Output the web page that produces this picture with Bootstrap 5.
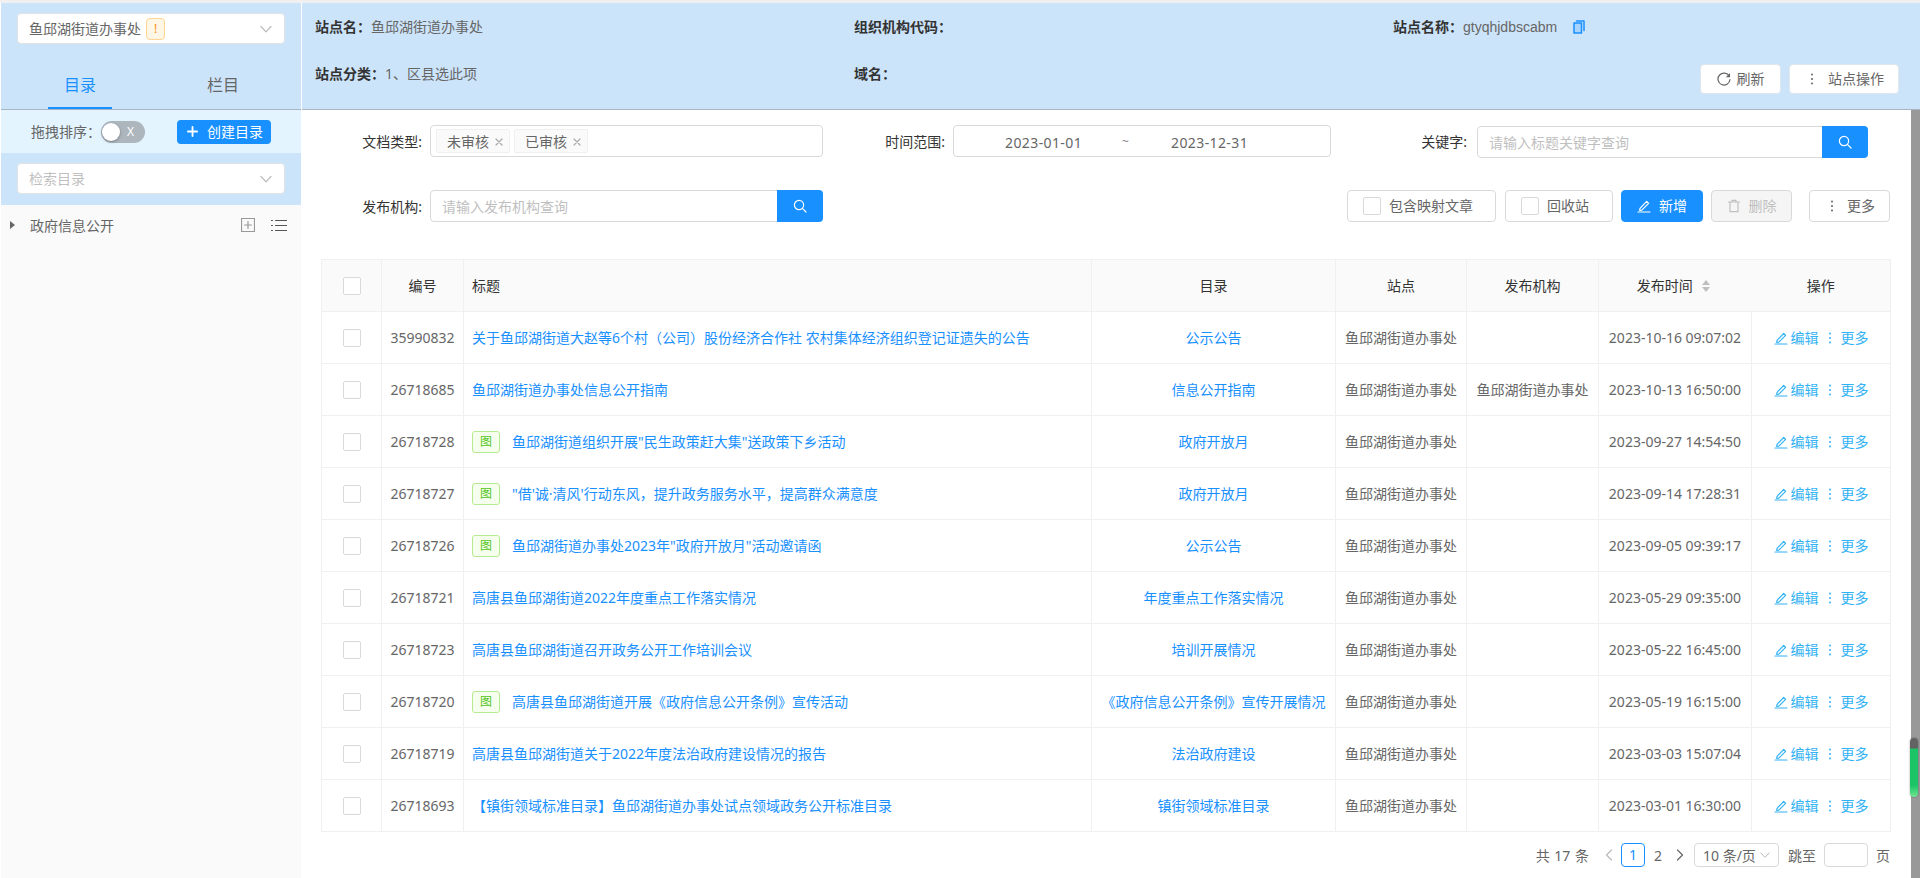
<!DOCTYPE html>
<html lang="zh-CN">

<head>
  <meta charset="UTF-8">
  <meta name="viewport" content="width=device-width, initial-scale=1.0">
  <title>站点文档管理</title>
  <link rel="stylesheet" href="https://cdn.jsdelivr.net/npm/bootstrap@5.3.0/dist/css/bootstrap.min.css">
  <style>
    html, body { height: 100%; }
    body { font-family: "Noto Sans", "Noto Sans CJK SC", sans-serif; font-size: 14px; color: #666; overflow: hidden; background: #fff; }
    .ic { display: inline-block; flex: none; fill: none; stroke: currentColor; stroke-width: 1.2; stroke-linecap: round; stroke-linejoin: round; }
    .ic-fill { fill: currentColor; stroke: none; }

    .app-shell { height: 100vh; border-top: 3px solid #f0f0f0; }

    /* sidebar */
    .side-col { width: 302px; flex: none; padding-left: 1px; border-right: 1px solid #fff; }
    .side-head { height: 107px; background: #cce4fa; border-bottom: 1px solid #a9b6c2; }
    .pick-box { height: 31px; margin: 0 16px; padding: 0 12px 0 11px; background: #fff; border: 1px solid #e2e2e2; border-radius: 4px; }
    .pick-first { margin-top: 10px; color: #666; }
    .warn-tag { width: 19px; height: 22px; margin-left: 5px; background: #fff7e6; border: 1px solid #ffd591; border-radius: 4px; color: #fa8c16; font-size: 12px; line-height: 20px; text-align: center; }
    .pick-arrow { color: #bbb; margin-left: auto; }
    .tab-row { height: 64px; margin-top: 1px; }
    .tab-item { width: 142px; height: 100%; padding-top: 28px; font-size: 16px; line-height: 24px; color: #666; text-align: center; }
    .tab-item + .tab-item { padding-left: 2px; }
    .tab-first { margin-left: 8px; color: #1890ff; }
    .tab-first span { display: block; width: 64px; height: 36px; margin: 0 auto; border-bottom: 2px solid #1890ff; }
    .side-tools { height: 43px; padding: 0 30px; background: #e3f4ff; }
    .tool-label { font-size: 14px; color: #666; }
    .sort-switch { position: relative; width: 44px; height: 22px; background: #adb5bd; border-radius: 11px; color: #fff; font-size: 12px; line-height: 22px; padding-left: 26px; }
    .sort-switch i { position: absolute; left: 1px; top: 2px; width: 18px; height: 18px; border-radius: 50%; background: #fff; box-shadow: 0 1px 3px rgba(0, 0, 0, .3); }
    .btn-create { width: 94px; height: 24px; margin-left: auto; padding: 0 0 0 10px; background: #1890ff; border: 0; border-radius: 4px; color: #fff; font-size: 14px; line-height: 24px; }
    .btn-create svg { margin-right: 9px; stroke-width: 2; }
    .side-search { height: 52px; padding-top: 10px; background: #cce4fa; }
    .ph-text { color: #bfbfbf; }
    .tree-wrap { flex: 1; background: #fafafa; }
    .tree-row { height: 40px; padding: 0 14px 0 9px; color: #666; }
    .tree-arrow { width: 0; height: 0; border-left: 5px solid #666; border-top: 4px solid transparent; border-bottom: 4px solid transparent; margin-right: 15px; }
    .tree-add { color: #999; }
    .tree-list { color: #555; }

    /* site header */
    .site-head { height: 107px; padding: 14px 21px 0 13px; background: #cce4fa; border-bottom: 1px solid #a9b6c2; color: #666; }
    .site-line { height: 47px; line-height: 20px; }
    .site-cell { width: 539px; flex: none; }
    .site-cell b, .site-key { color: #333; font-weight: 700; }
    .site-code { font-family: "Liberation Sans", sans-serif; }
    .copy-ic { margin: 3px 0 0 16px; color: #1890ff; stroke-width: 1.5; }
    .head-btn { height: 30px; padding: 0 0 1px; background: #fff; border: 1px solid #dfe6ec; border-radius: 4px; color: #666; font-size: 14px; }
    .head-refresh { width: 81px; margin-right: 8px; }
    .head-refresh svg { margin-right: 6px; }
    .head-ops { width: 110px; padding-left: 20px; }
    .head-ops svg { margin-right: 14px; }

    /* content */
    .main-wrap { flex: 1; min-height: 0; }
    .main-pane { flex: 1; padding: 15px 21px 0 18px; min-width: 0; }
    .scroll-rail { position: relative; width: 9px; flex: none; background: #999; }
    .scroll-thumb { position: absolute; left: -1px; top: 628px; width: 8px; height: 59px; border-radius: 4px; background: linear-gradient(#626262 0, #626262 10px, #1cc468 11px, #1cc468 80%, #6fe58f 100%); box-shadow: 0 0 2px rgba(0, 0, 0, .4); }

    .flt-label { height: 32px; color: #333; text-align: right; line-height: 33px; flex: none; padding-right: 3px; }
    .lab-a { width: 105px; margin-right: 5px; }
    .lab-b { width: 122px; margin-right: 8px; padding-right: 0; }
    .lab-c { width: 138px; margin-right: 8px; padding-right: 2px; }
    .field-box { height: 32px; background: #fff; border: 1px solid #d9d9d9; border-radius: 4px; }
    .field-a { width: 393px; padding-left: 5px; }
    .field-b { width: 378px; padding-top: 2px; color: #666; letter-spacing: .4px; }
    .date-a { margin-left: 51px; width: 75px; }
    .date-sep { width: 8px; margin: 0 41px 0 42px; color: #888; font-size: 12px; }
    .choice-tag { width: 74px; height: 24px; margin-right: 4px; padding: 1px 0 0 10px; background: #fafafa; border: 1px solid #f0f0f0; border-radius: 2px; color: #666; line-height: 22px; }
    .choice-tag svg { color: #aaa; margin-left: 6px; }
    .search-group { height: 32px; }
    .search-a { width: 393px; }
    .search-c { width: 391px; margin-top: 1px; }
    .search-group .form-control { height: 32px; padding: 0 11px; border-color: #d9d9d9; border-radius: 4px 0 0 4px; font-size: 14px; color: #666; box-shadow: none; }
    .search-group .form-control::placeholder { color: #bfbfbf; }
    .search-go { width: 46px; padding: 0; background: #1890ff; border: 0; border-radius: 0 4px 4px 0; color: #fff; }
    .flt-second { margin-top: 32px; }
    .act-btn { height: 32px; padding: 0 0 1px; background: #fff; border: 1px solid #d9d9d9; border-radius: 4px; color: #666; font-size: 14px; }
    .act-check { width: 18px; height: 18px; margin-right: 8px; border: 1px solid #d9d9d9; border-radius: 2px; background: #fff; }
    .act-map { width: 149px; margin-right: 9px; padding-left: 15px; }
    .act-recycle { width: 108px; margin-right: 8px; padding-left: 15px; }
    .act-new { width: 82px; margin-right: 8px; background: #1890ff; border-color: #1890ff; color: #fff; }
    .btn.act-del:disabled { width: 81px; margin-right: 17px; background: #f5f5f5; border-color: #d9d9d9; color: #bfbfbf; opacity: 1; }
    .act-more { width: 81px; padding-left: 20px; }
    .act-more svg { margin-right: 13px; }

    /* table */
    .doc-table { width: 1569px; margin: 37px 0 0 1px; table-layout: fixed; border-color: #f0f0f0; }
    .doc-table > :not(caption) > * > * { height: 52px; padding: 0 8px; border-color: #f0f0f0; color: #666; font-size: 14px; box-shadow: none; background: #fff; vertical-align: middle; }
    .doc-table > thead > tr > th { background: #fafafa; color: #333; font-weight: 400; }
    .doc-table > thead > tr > .no-right { border-right-width: 0; padding-right: 12px; }
    .doc-table > thead > tr > .no-left { border-left-width: 0; }
    .row-check { display: block; width: 18px; height: 18px; margin: 0 auto; background: #fff; border: 1px solid #d9d9d9; border-radius: 2px; }
    .doc-table a { color: #1890ff; text-decoration: none; }
    .doc-table .op-link { color: #33b2f5; }
    .op-link svg { margin-right: 3px; }
    .op-dots { margin: 0 9px; color: #33b2f5; }
    .pic-tag { width: 28px; height: 22px; margin-right: 12px; background: #f6ffed; border: 1px solid #b7eb8f; border-radius: 3px; color: #52c41a; font-size: 12px; line-height: 20px; text-align: center; flex: none; }
    .sort-mark { margin-left: 9px; color: #bfbfbf; vertical-align: -2px; }

    /* pager */
    .pager-row { height: 24px; margin-top: 11px; color: #666; }
    .pager-total { margin-right: 16px; word-spacing: 1px; }
    .pager-arrow { width: 8px; }
    .pager-on { width: 24px; height: 24px; margin: 0 9px 0 8px; border: 1px solid #1890ff; border-radius: 4px; color: #1890ff; line-height: 22px; text-align: center; }
    .pager-num { width: 8px; margin-right: 14px; }
    .pager-size { width: 85px; height: 24px; margin-left: 10px; padding-left: 8px; background: #fff; border: 1px solid #d9d9d9; border-radius: 4px; white-space: nowrap; }
    .pager-jump { margin: 0 8px 0 9px; }
    .pager-input { width: 44px; height: 24px; margin-right: 8px; border: 1px solid #d9d9d9; border-radius: 4px; }
  </style>
</head>

<body>
  <svg width="0" height="0" class="position-absolute">
    <symbol id="i-down" viewBox="0 0 12 12"><path d="M1 3.5 6 8.8l5-5.3"/></symbol>
    <symbol id="i-search" viewBox="0 0 14 14"><circle cx="6" cy="6" r="4.6"/><path d="m9.4 9.4 3.6 3.6"/></symbol>
    <symbol id="i-edit" viewBox="0 0 14 14"><path d="M3 9.3 9.7 2.4l1.9 1.9-6.8 6.8-2.1.2zM1 13h12"/></symbol>
    <symbol id="i-dots" viewBox="0 0 4 14"><circle class="ic-fill" cx="2" cy="2.5" r="1"/><circle class="ic-fill" cx="2" cy="7" r="1"/><circle class="ic-fill" cx="2" cy="11.500" r="1"/></symbol>
    <symbol id="i-x" viewBox="0 0 8 8"><path d="m1 1 6 6M7 1 1 7"/></symbol>
    <symbol id="i-trash" viewBox="0 0 14 14"><path d="M1.500 3h11M5 3V1.300h4V3M3 3v9.700h8V3"/></symbol>
    <symbol id="i-reload" viewBox="0 0 14 14"><path d="M12.300 4.200A6 6 0 1 0 13 7.500"/><path class="ic-fill" d="M13 1v4.200H8.800z"/></symbol>
    <symbol id="i-copy" viewBox="0 0 12 14"><path d="M3.500 1h7.500v9.500"/><path fill="#a9d3fb" d="M1 3h7.500v10H1z"/></symbol>
    <symbol id="i-list" viewBox="0 0 16 13"><path d="M4.500 1.500H16M4.500 6.500H16M4.500 11.500H16M.5 1.500h1M.5 6.500h1M.5 11.500h1"/></symbol>
    <symbol id="i-box-plus" viewBox="0 0 14 14"><path d="M.5.5h13v13H.5zM7 3.500v7M3.500 7h7"/></symbol>
    <symbol id="i-plus" viewBox="0 0 12 12"><path d="M6 1v10M1 6h10"/></symbol>
    <symbol id="i-left" viewBox="0 0 8 12"><path d="M6.500 1 1.500 6l5 5"/></symbol>
    <symbol id="i-right" viewBox="0 0 8 12"><path d="m1.500 1 5 5-5 5"/></symbol>
    <symbol id="i-sort" viewBox="0 0 8 14"><path class="ic-fill" d="M4 1 8 6H0zM4 13 0 8h8z"/></symbol>
  </svg>

  <div class="app-shell d-flex">
    <!-- left -->
    <div class="side-col d-flex flex-column">
      <div class="side-head">
        <div class="pick-box pick-first d-flex align-items-center">
          鱼邱湖街道办事处<span class="warn-tag">!</span>
          <svg class="ic pick-arrow" width="12" height="12"><use href="#i-down"/></svg>
        </div>
        <div class="tab-row d-flex">
          <div class="tab-item tab-first"><span>目录</span></div>
          <div class="tab-item">栏目</div>
        </div>
      </div>
      <div class="side-tools d-flex align-items-center">
        <span class="tool-label">拖拽排序：</span>
        <span class="sort-switch"><i></i>X</span>
        <button class="btn btn-create d-flex align-items-center" type="button">
          <svg class="ic" width="11" height="11"><use href="#i-plus"/></svg>创建目录
        </button>
      </div>
      <div class="side-search">
        <div class="pick-box d-flex align-items-center ph-text">
          检索目录
          <svg class="ic pick-arrow" width="12" height="12"><use href="#i-down"/></svg>
        </div>
      </div>
      <div class="tree-wrap">
        <div class="tree-row d-flex align-items-center">
          <span class="tree-arrow"></span>
          政府信息公开
          <svg class="ic ms-auto me-3 tree-add" width="14" height="14"><use href="#i-box-plus"/></svg>
          <svg class="ic tree-list" width="16" height="13"><use href="#i-list"/></svg>
        </div>
      </div>
    </div>

    <!-- right -->
    <div class="flex-grow-1 d-flex flex-column" style="min-width:0">
      <div class="site-head">
        <div class="site-line d-flex">
          <div class="site-cell"><b>站点名：</b>鱼邱湖街道办事处</div>
          <div class="site-cell"><b>组织机构代码：</b></div>
          <div class="d-flex align-items-start"><span class="site-key text-nowrap">站点名称：</span><span class="site-code">gtyqhjdbscabm</span>
            <svg class="ic copy-ic" width="12" height="14"><use href="#i-copy"/></svg>
          </div>
        </div>
        <div class="d-flex align-items-start" style="line-height:20px">
          <div class="site-cell"><b>站点分类：</b>1、区县选此项</div>
          <div class="site-cell"><b>域名：</b></div>
          <div class="ms-auto d-flex">
            <button class="btn head-btn head-refresh d-flex align-items-center justify-content-center" type="button">
              <svg class="ic" width="14" height="14"><use href="#i-reload"/></svg>刷新
            </button>
            <button class="btn head-btn head-ops d-flex align-items-center" type="button">
              <svg class="ic" width="4" height="14"><use href="#i-dots"/></svg>站点操作
            </button>
          </div>
        </div>
      </div>

      <div class="main-wrap d-flex">
        <div class="main-pane">
          <div class="d-flex">
            <div class="flt-label lab-a">文档类型:</div>
            <div class="field-box field-a d-flex align-items-center">
              <span class="choice-tag d-flex align-items-center">未审核<svg class="ic" width="8" height="8"><use href="#i-x"/></svg></span>
              <span class="choice-tag d-flex align-items-center">已审核<svg class="ic" width="8" height="8"><use href="#i-x"/></svg></span>
            </div>
            <div class="flt-label lab-b">时间范围:</div>
            <div class="field-box field-b d-flex align-items-center">
              <span class="date-a text-nowrap">2023-01-01</span><span class="date-sep">~</span><span class="text-nowrap">2023-12-31</span>
            </div>
            <div class="flt-label lab-c">关键字:</div>
            <div class="input-group search-group search-c">
              <input type="text" class="form-control" placeholder="请输入标题关键字查询">
              <button class="btn search-go d-flex align-items-center justify-content-center" type="button"><svg class="ic" width="14" height="14"><use href="#i-search"/></svg></button>
            </div>
          </div>

          <div class="d-flex flt-second">
            <div class="flt-label lab-a">发布机构:</div>
            <div class="input-group search-group search-a">
              <input type="text" class="form-control" placeholder="请输入发布机构查询">
              <button class="btn search-go d-flex align-items-center justify-content-center" type="button"><svg class="ic" width="14" height="14"><use href="#i-search"/></svg></button>
            </div>
            <div class="ms-auto d-flex">
              <button class="btn act-btn act-map d-flex align-items-center" type="button"><span class="act-check"></span>包含映射文章</button>
              <button class="btn act-btn act-recycle d-flex align-items-center" type="button"><span class="act-check"></span>回收站</button>
              <button class="btn act-btn act-new d-flex align-items-center justify-content-center" type="button"><svg class="ic me-2" width="14" height="14"><use href="#i-edit"/></svg>新增</button>
              <button class="btn act-btn act-del d-flex align-items-center justify-content-center" type="button" disabled><svg class="ic me-2" width="14" height="14"><use href="#i-trash"/></svg>删除</button>
              <button class="btn act-btn act-more d-flex align-items-center" type="button"><svg class="ic" width="4" height="14"><use href="#i-dots"/></svg>更多</button>
            </div>
          </div>

          <table class="table table-bordered doc-table">
            <colgroup>
              <col style="width:60px"><col style="width:82px"><col style="width:628px"><col style="width:244px"><col style="width:131px"><col style="width:132px"><col style="width:153px"><col style="width:139px">
            </colgroup>
            <thead>
              <tr>
                <th><span class="row-check"></span></th>
                <th class="text-center">编号</th>
                <th>标题</th>
                <th class="text-center">目录</th>
                <th class="text-center">站点</th>
                <th class="text-center">发布机构</th>
                <th class="text-center no-right">发布时间<svg class="ic sort-mark" width="8" height="14"><use href="#i-sort"/></svg></th>
                <th class="text-center no-left">操作</th>
              </tr>
            </thead>
            <tbody id="docRows"></tbody>
          </table>

          <div class="pager-row d-flex align-items-center justify-content-end">
            <span class="pager-total">共 17 条</span>
            <svg class="ic pager-arrow" width="8" height="12" style="color:#bbb"><use href="#i-left"/></svg>
            <span class="pager-on">1</span>
            <span class="pager-num">2</span>
            <svg class="ic pager-arrow" width="8" height="12"><use href="#i-right"/></svg>
            <span class="pager-size d-flex align-items-center">10 条/页<svg class="ic ms-1" width="10" height="10" style="color:#bbb"><use href="#i-down"/></svg></span>
            <span class="pager-jump">跳至</span>
            <span class="pager-input"></span>
            <span>页</span>
          </div>
        </div>
        <div class="scroll-rail"><div class="scroll-thumb"></div></div>
      </div>
    </div>
  </div>

  <script src="https://cdn.jsdelivr.net/npm/bootstrap@5.3.0/dist/js/bootstrap.bundle.min.js"></script>
  <script>
    const site = '鱼邱湖街道办事处';
    const docs = [
      ['35990832', '关于鱼邱湖街道大赵等6个村（公司）股份经济合作社 农村集体经济组织登记证遗失的公告', '公示公告', '', '2023-10-16 09:07:02', false],
      ['26718685', '鱼邱湖街道办事处信息公开指南', '信息公开指南', site, '2023-10-13 16:50:00', false],
      ['26718728', '鱼邱湖街道组织开展"民生政策赶大集"送政策下乡活动', '政府开放月', '', '2023-09-27 14:54:50', true],
      ['26718727', '"借\'诚·清风\'行动东风，提升政务服务水平，提高群众满意度', '政府开放月', '', '2023-09-14 17:28:31', true],
      ['26718726', '鱼邱湖街道办事处2023年"政府开放月"活动邀请函', '公示公告', '', '2023-09-05 09:39:17', true],
      ['26718721', '高唐县鱼邱湖街道2022年度重点工作落实情况', '年度重点工作落实情况', '', '2023-05-29 09:35:00', false],
      ['26718723', '高唐县鱼邱湖街道召开政务公开工作培训会议', '培训开展情况', '', '2023-05-22 16:45:00', false],
      ['26718720', '高唐县鱼邱湖街道开展《政府信息公开条例》宣传活动', '《政府信息公开条例》宣传开展情况', '', '2023-05-19 16:15:00', true],
      ['26718719', '高唐县鱼邱湖街道关于2022年度法治政府建设情况的报告', '法治政府建设', '', '2023-03-03 15:07:04', false],
      ['26718693', '【镇街领域标准目录】鱼邱湖街道办事处试点领域政务公开标准目录', '镇街领域标准目录', '', '2023-03-01 16:30:00', false]
    ];

    document.getElementById('docRows').innerHTML = docs.map(d => `
      <tr>
        <td><span class="row-check"></span></td>
        <td class="text-center">${d[0]}</td>
        <td><div class="d-flex align-items-center">${d[5] ? '<span class="pic-tag">图</span>' : ''}<a href="#" class="text-nowrap">${d[1]}</a></div></td>
        <td class="text-center text-nowrap"><a href="#">${d[2]}</a></td>
        <td class="text-center text-nowrap">${site}</td>
        <td class="text-center text-nowrap">${d[3]}</td>
        <td class="text-center text-nowrap">${d[4]}</td>
        <td class="text-nowrap">
          <div class="d-flex align-items-center justify-content-center">
            <a href="#" class="op-link d-flex align-items-center"><svg class="ic" width="14" height="14"><use href="#i-edit"/></svg>编辑</a>
            <svg class="ic op-dots" width="4" height="14"><use href="#i-dots"/></svg>
            <a href="#" class="op-link">更多</a>
          </div>
        </td>
      </tr>`).join('');
  </script>
</body>

</html>
